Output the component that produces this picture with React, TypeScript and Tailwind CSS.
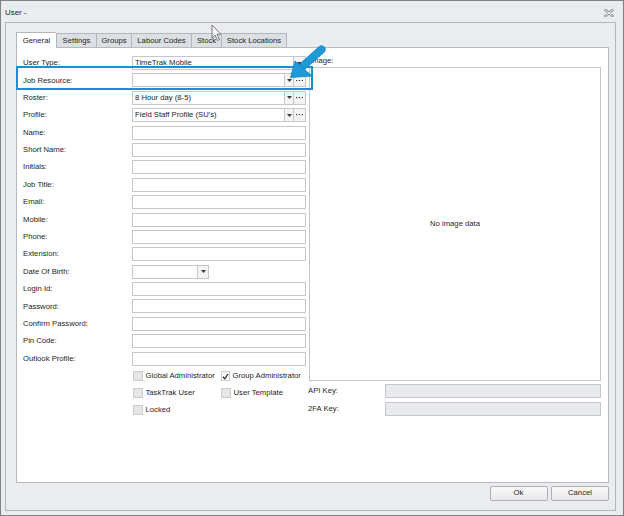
import React from 'react';

type Row = {
  label: string;
  kind: 'text' | 'combo' | 'combo2' | 'date';
  value?: string;
};

const rows: Row[] = [
  { label: 'User Type:', kind: 'combo', value: 'TimeTrak Mobile' },
  { label: 'Job Resource:', kind: 'combo2' },
  { label: 'Roster:', kind: 'combo2', value: '8 Hour day (8-5)' },
  { label: 'Profile:', kind: 'combo2', value: "Field Staff Profile (SU's)" },
  { label: 'Name:', kind: 'text' },
  { label: 'Short Name:', kind: 'text' },
  { label: 'Initials:', kind: 'text' },
  { label: 'Job Title:', kind: 'text' },
  { label: 'Email:', kind: 'text' },
  { label: 'Mobile:', kind: 'text' },
  { label: 'Phone:', kind: 'text' },
  { label: 'Extension:', kind: 'text' },
  { label: 'Date Of Birth:', kind: 'date' },
  { label: 'Login Id:', kind: 'text' },
  { label: 'Password:', kind: 'text' },
  { label: 'Confirm Password:', kind: 'text' },
  { label: 'Pin Code:', kind: 'text' },
  { label: 'Outlook Profile:', kind: 'text' },
];

const tabs = [
  { name: 'General', w: 'w-[40px]' },
  { name: 'Settings', w: 'w-[40px]' },
  { name: 'Groups', w: 'w-[35px]' },
  { name: 'Labour Codes', w: 'w-[60px]' },
  { name: 'Stock', w: 'w-[30px]' },
  { name: 'Stock Locations', w: 'w-[66px] border-r' },
];

function DownArrow() {
  return (
    <svg width="5" height="3" viewBox="0 0 5 3">
      <path d="M0 0 H5 L2.5 3 Z" fill="#3a3a3a" />
    </svg>
  );
}

function Dots() {
  return (
    <svg width="7" height="1.5" viewBox="0 0 7 1.5">
      <rect x="0" y="0" width="1.2" height="1.2" fill="#3a3a3a" />
      <rect x="2.9" y="0" width="1.2" height="1.2" fill="#3a3a3a" />
      <rect x="5.8" y="0" width="1.2" height="1.2" fill="#3a3a3a" />
    </svg>
  );
}

function Field({ row }: { row: Row }) {
  if (row.kind === 'text') {
    return <div className="h-[14px] w-[174px] border border-[#c4c7cb] bg-white" />;
  }
  if (row.kind === 'date') {
    return (
      <div className="flex h-[14px] w-[77px] border border-[#c4c7cb] bg-white">
        <div className="flex-1" />
        <div className="flex w-[11px] items-center justify-center border-l border-[#c4c7cb] bg-[#f4f4f4]">
          <DownArrow />
        </div>
      </div>
    );
  }
  return (
    <div className="flex h-[14px] w-[174px] border border-[#c4c7cb] bg-white">
      <div className="flex flex-1 items-center pl-[2px] leading-none">{row.value}</div>
      {row.kind === 'combo2' && (
        <div className="flex w-[9px] items-center justify-center border-l border-[#c4c7cb] bg-[#f4f4f4]">
          <DownArrow />
        </div>
      )}
      <div className="flex w-[12px] items-center justify-center border-l border-[#c4c7cb] bg-[#f4f4f4]">
        {row.kind === 'combo2' ? <Dots /> : <DownArrow />}
      </div>
    </div>
  );
}

function Check({ label, checked, w }: { label: string; checked?: boolean; w: string }) {
  return (
    <div className={`flex shrink-0 items-center whitespace-nowrap ${w}`}>
      <div
        className={`flex h-[10px] w-[10px] items-center justify-center border border-[#c9cbce] ${
          checked ? 'bg-[#f7f7f7]' : 'bg-[#e5e6e8]'
        }`}
      >
        {checked && (
          <svg width="7" height="7" viewBox="0 0 7 7">
            <path d="M1 3.8 L2.8 5.8 L6 1" fill="none" stroke="#2a2a2a" strokeWidth="1.3" />
          </svg>
        )}
      </div>
      <span className="ml-[2.5px] leading-none">{label}</span>
    </div>
  );
}

export default function App() {
  return (
    <div className="relative h-[516px] w-[624px] overflow-hidden border border-[#7f8185] bg-[#eaecef] font-['Liberation_Sans',Arial,sans-serif] text-[7.7px] text-[#1e1e1e]">
      {/* Title bar */}
      <div className="flex h-[21px] items-center justify-between pl-[4px] pr-[9px] pt-[3px]">
        <span className="text-[7.9px] leading-none">User -</span>
        <svg width="10" height="8" viewBox="0 0 10 8">
          <path d="M1.5 1 L8.5 7 M8.5 1 L1.5 7" stroke="#8e9094" strokeWidth="2.6" strokeLinecap="round" />
          <path d="M1.5 1 L8.5 7 M8.5 1 L1.5 7" stroke="#f2f3f5" strokeWidth="1" strokeLinecap="round" />
        </svg>
      </div>

      {/* Frame */}
      <div className="ml-[4px] h-[489px] w-[611px] border border-[#b3b6ba] bg-[#eaecef] pl-[10px] pt-[9px]">
        {/* Tabs */}
        <div className="flex h-[15px] items-end">
          {tabs.map((t, i) => (
            <div
              key={t.name}
              className={`flex items-center justify-center border-l border-t border-[#b3b6bb] leading-none ${t.w} ${
                i === 0 ? 'relative z-10 -mb-[1px] h-[16px] bg-white' : 'h-[14px] bg-[#dcdfe3]'
              }`}
            >
              {t.name}
            </div>
          ))}
        </div>

        {/* Tab page */}
        <div className="flex h-[436px] w-[593px] border border-[#b6b9bd] bg-white">
          {/* Left form */}
          <div className="w-[289px] shrink-0 pl-[6px] pt-[8px]">
            {rows.map((r) => (
              <div key={r.label} className="flex h-[17.4px] items-start">
                <div className="flex h-[14px] w-[109px] items-center leading-none">{r.label}</div>
                <Field row={r} />
              </div>
            ))}
            <div className="-mt-[1px] pl-[110px]">
              <div className="flex h-[16.6px] items-center">
                <Check label="Global Administrator" w="w-[88px]" />
                <Check label="Group Administrator" checked w="w-[76px]" />
              </div>
              <div className="flex h-[16.6px] items-center">
                <Check label="TaskTrak User" w="w-[88px]" />
                <Check label="User Template" w="w-[76px]" />
              </div>
              <div className="flex h-[16.6px] items-center">
                <Check label="Locked" w="w-[88px]" />
              </div>
            </div>
          </div>

          {/* Right column */}
          <div className="ml-[3px] w-[292px] pt-[8px]">
            <div className="flex h-[10.7px] items-center pl-[1px] leading-none">Image:</div>
            <div className="flex h-[314px] items-center justify-center border border-[#c4c7cb] leading-none">
              No image data
            </div>
            <div className="mt-[3.6px] flex h-[14px] items-center">
              <div className="-ml-[1px] w-[77px] leading-none">API Key:</div>
              <div className="h-[14px] flex-1 border border-[#c4c7cb] bg-[#e8eaed]" />
            </div>
            <div className="mt-[4px] flex h-[14px] items-center">
              <div className="-ml-[1px] w-[77px] leading-none">2FA Key:</div>
              <div className="h-[14px] flex-1 border border-[#c4c7cb] bg-[#e8eaed]" />
            </div>
          </div>
        </div>

        {/* Buttons */}
        <div className="mt-[3px] flex w-[593px] justify-end gap-[3.5px]">
          <button className="flex h-[14.5px] w-[58px] items-center justify-center rounded-[2px] border border-[#adb0b4] bg-gradient-to-b from-[#f8f8f8] to-[#e9e9e9] leading-none">
            Ok
          </button>
          <button className="flex h-[14.5px] w-[58px] items-center justify-center rounded-[2px] border border-[#adb0b4] bg-gradient-to-b from-[#f8f8f8] to-[#e9e9e9] leading-none">
            Cancel
          </button>
        </div>
      </div>

      {/* Highlight box */}
      <div className="pointer-events-none absolute left-[15px] top-[65px] h-[24px] w-[297px] border-2 border-[#1c8dd2]" />

      {/* Callout arrow */}
      <svg className="pointer-events-none absolute left-[284px] top-[42px]" width="42" height="40" viewBox="0 0 42 40">
        <path d="M36.5 6.5 L18 23" stroke="#1583c4" strokeWidth="8" strokeLinecap="round" />
        <path d="M36.5 6.5 L18 23" stroke="#1e9ad9" strokeWidth="6.4" strokeLinecap="round" />
        <path d="M5.5 34.5 L10 18 L27 33 Z" fill="#1e9ad9" stroke="#1583c4" strokeWidth="0.8" strokeLinejoin="round" />
      </svg>

      {/* Mouse cursor */}
      <svg className="pointer-events-none absolute left-[210px] top-[23px]" width="12" height="18" viewBox="0 0 12 18">
        <path
          d="M1 1 L1 14 L4 11 L6.5 16.5 L8.5 15.6 L6 10.3 L10 10.3 Z"
          fill="#ffffff"
          fillOpacity="0.7"
          stroke="#6a6a6a"
          strokeWidth="0.9"
          strokeLinejoin="round"
        />
      </svg>
    </div>
  );
}
